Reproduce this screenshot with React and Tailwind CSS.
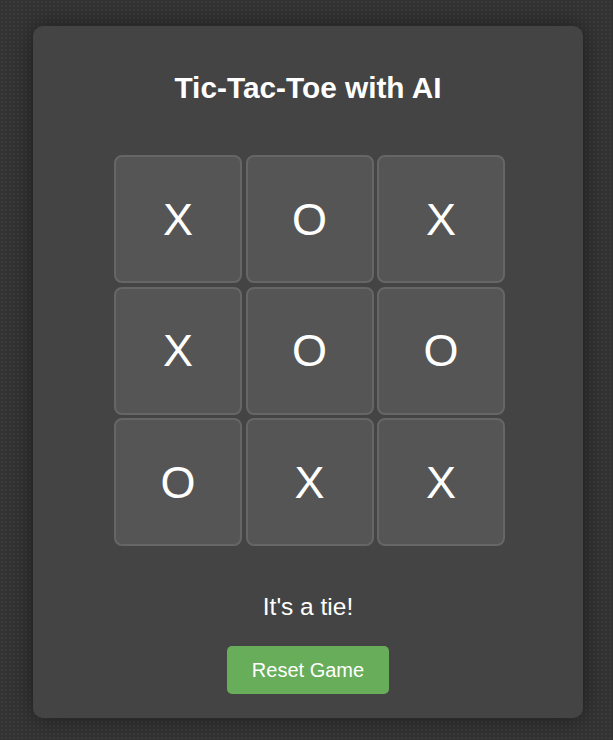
import React, { useState } from 'react';

const initialBoard = ['X', 'O', 'X', 'X', 'O', 'O', 'O', 'X', 'X'];

export default function App() {
  const [board, setBoard] = useState(initialBoard);
  const [status, setStatus] = useState("It's a tie!");

  const resetGame = () => {
    setBoard(Array(9).fill(null));
    setStatus('Your turn');
  };

  return (
    <div
      className="min-h-[740px] w-full bg-[#333333] bg-[radial-gradient(#3b3b3b_1px,transparent_1px)] bg-[size:4px_4px] pt-[26px] pl-[33px]"
      style={{ fontFamily: '"Liberation Sans", Arial, sans-serif' }}
    >
      <div className="w-[550px] h-[692px] bg-[#444444] rounded-[10px] shadow-[0_0_24px_rgba(0,0,0,0.45)] pt-[45px] flex flex-col items-center text-white">
        <h1 className="text-[29.8px] font-bold leading-[33px]">Tic-Tac-Toe with AI</h1>

        {/* Board */}
        <div className="mt-[51px] ml-[3px] grid grid-cols-[repeat(3,128px)] gap-[3.5px]">
          {board.map((cell, i) => (
            <button
              key={i}
              className="w-[128px] h-[128px] bg-[#555555] border-2 border-[#666666] rounded-[8px] flex items-center justify-center text-[45px] leading-none text-white"
            >
              {cell}
            </button>
          ))}
        </div>

        <p className="mt-[47px] text-[24.5px] leading-[28px]">{status}</p>

        <button
          onClick={resetGame}
          className="mt-[25px] h-[48px] px-[25px] bg-[#68ad5a] rounded-[5px] text-[20px] text-white"
        >
          Reset Game
        </button>
      </div>
    </div>
  );
}
